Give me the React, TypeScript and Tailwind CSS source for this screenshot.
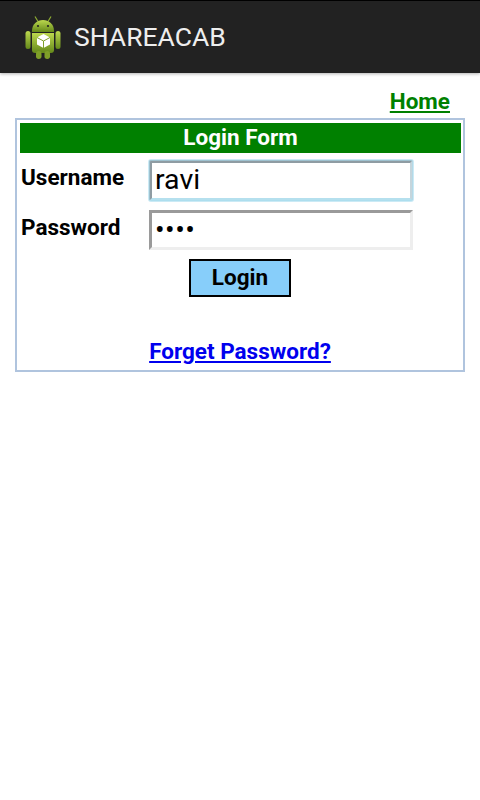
const AndroidIcon = () => (
  <svg width="36" height="43" viewBox="0 0 36 43" className="mt-[1px]">
    <defs>
      <linearGradient id="green" x1="0" y1="0" x2="0" y2="1">
        <stop offset="0" stopColor="#bcd84e" />
        <stop offset="1" stopColor="#64881a" />
      </linearGradient>
    </defs>
    <path d="M10 0.5l3 5M26 0.5l-3 5" stroke="#8fae32" strokeWidth="1.2" />
    <path d="M7 15C7 8 12 4 18 4s11 4 11 11v1H7z" fill="url(#green)" />
    <circle cx="13" cy="10" r="1.1" fill="#222" />
    <circle cx="23" cy="10" r="1.1" fill="#222" />
    <path d="M7 17h22v17a3 3 0 0 1-3 3H10a3 3 0 0 1-3-3z" fill="url(#green)" />
    <rect x="0.5" y="15" width="5" height="18" rx="2.5" fill="url(#green)" />
    <rect x="30.5" y="15" width="5" height="18" rx="2.5" fill="url(#green)" />
    <rect x="11" y="35" width="5.5" height="8" rx="2.7" fill="#7f9f28" />
    <rect x="19.5" y="35" width="5.5" height="8" rx="2.7" fill="#7f9f28" />
    <path d="M18.5 18l6.5 3.5v7l-6.5 3.5-6.5-3.5v-7z" fill="#fff" />
    <path d="M18.5 25l6.5-3.5M18.5 25l-6.5-3.5M18.5 25v7" stroke="#7f9f28" strokeWidth="1" fill="none" />
  </svg>
);

export default function App() {
  return (
    <div className="min-h-[800px] bg-white font-['Roboto',sans-serif] text-black">
      <header className="flex h-[73px] items-center border-t border-black bg-[#222222] pl-[25px] shadow-[0_1px_3px_rgba(0,0,0,0.3)]">
        <AndroidIcon />
        <span className="ml-[13px] text-[26.5px] text-[#eeeeee]">SHAREACAB</span>
      </header>

      <div className="flex h-[45px] items-end justify-end pr-[30px] pb-[1px]">
        <a href="#" className="text-[22.5px] leading-[32px] font-bold text-[#008000] underline">
          Home
        </a>
      </div>

      <div className="mx-[15px] h-[254px] border-2 border-[#b0c4de] py-[3px] pr-[2px] pl-[3px]">
        <div className="flex h-[30px] items-center justify-center bg-[#008000] text-[22.5px] font-bold text-white">
          Login Form
        </div>

        <div className="mt-[7px] flex h-[41px] pl-[1px]">
          <label className="w-[128px] pt-[1px] text-[22.5px] leading-[32px] font-bold">Username</label>
          <input
            readOnly
            value="ravi"
            className="h-[41px] w-[264px] rounded-[2px] border-[3px] border-t-[#8f9ca3] border-r-[#c5d5dc] border-b-[#b5e0ee] border-l-[#8f9ca3] px-[3px] text-[28.5px] outline-2 -outline-offset-1 outline-[#a8dcee]/60"
          />
        </div>

        <div className="mt-[9px] flex h-[40px] pl-[1px]">
          <label className="w-[128px] pt-[1px] text-[22.5px] leading-[32px] font-bold">Password</label>
          <input
            readOnly
            type="password"
            value="ravi"
            className="h-[40px] w-[264px] border-[3px] border-t-[#9a9a9a] border-r-[#eeeeee] border-b-[#eeeeee] border-l-[#9a9a9a] px-[3px] text-[28.5px] tracking-[0.5px]"
          />
        </div>

        <div className="mt-[9px] flex justify-center pr-[1px]">
          <button className="h-[38px] w-[102px] border-2 border-black bg-[#87cefa] pb-[4px] text-[22.5px] font-bold">
            Login
          </button>
        </div>

        <div className="mt-[38px] pr-[1px] text-center">
          <a href="#" className="text-[22.5px] leading-[32px] font-bold text-[#0000ee] underline">
            Forget Password?
          </a>
        </div>
      </div>
    </div>
  );
}
